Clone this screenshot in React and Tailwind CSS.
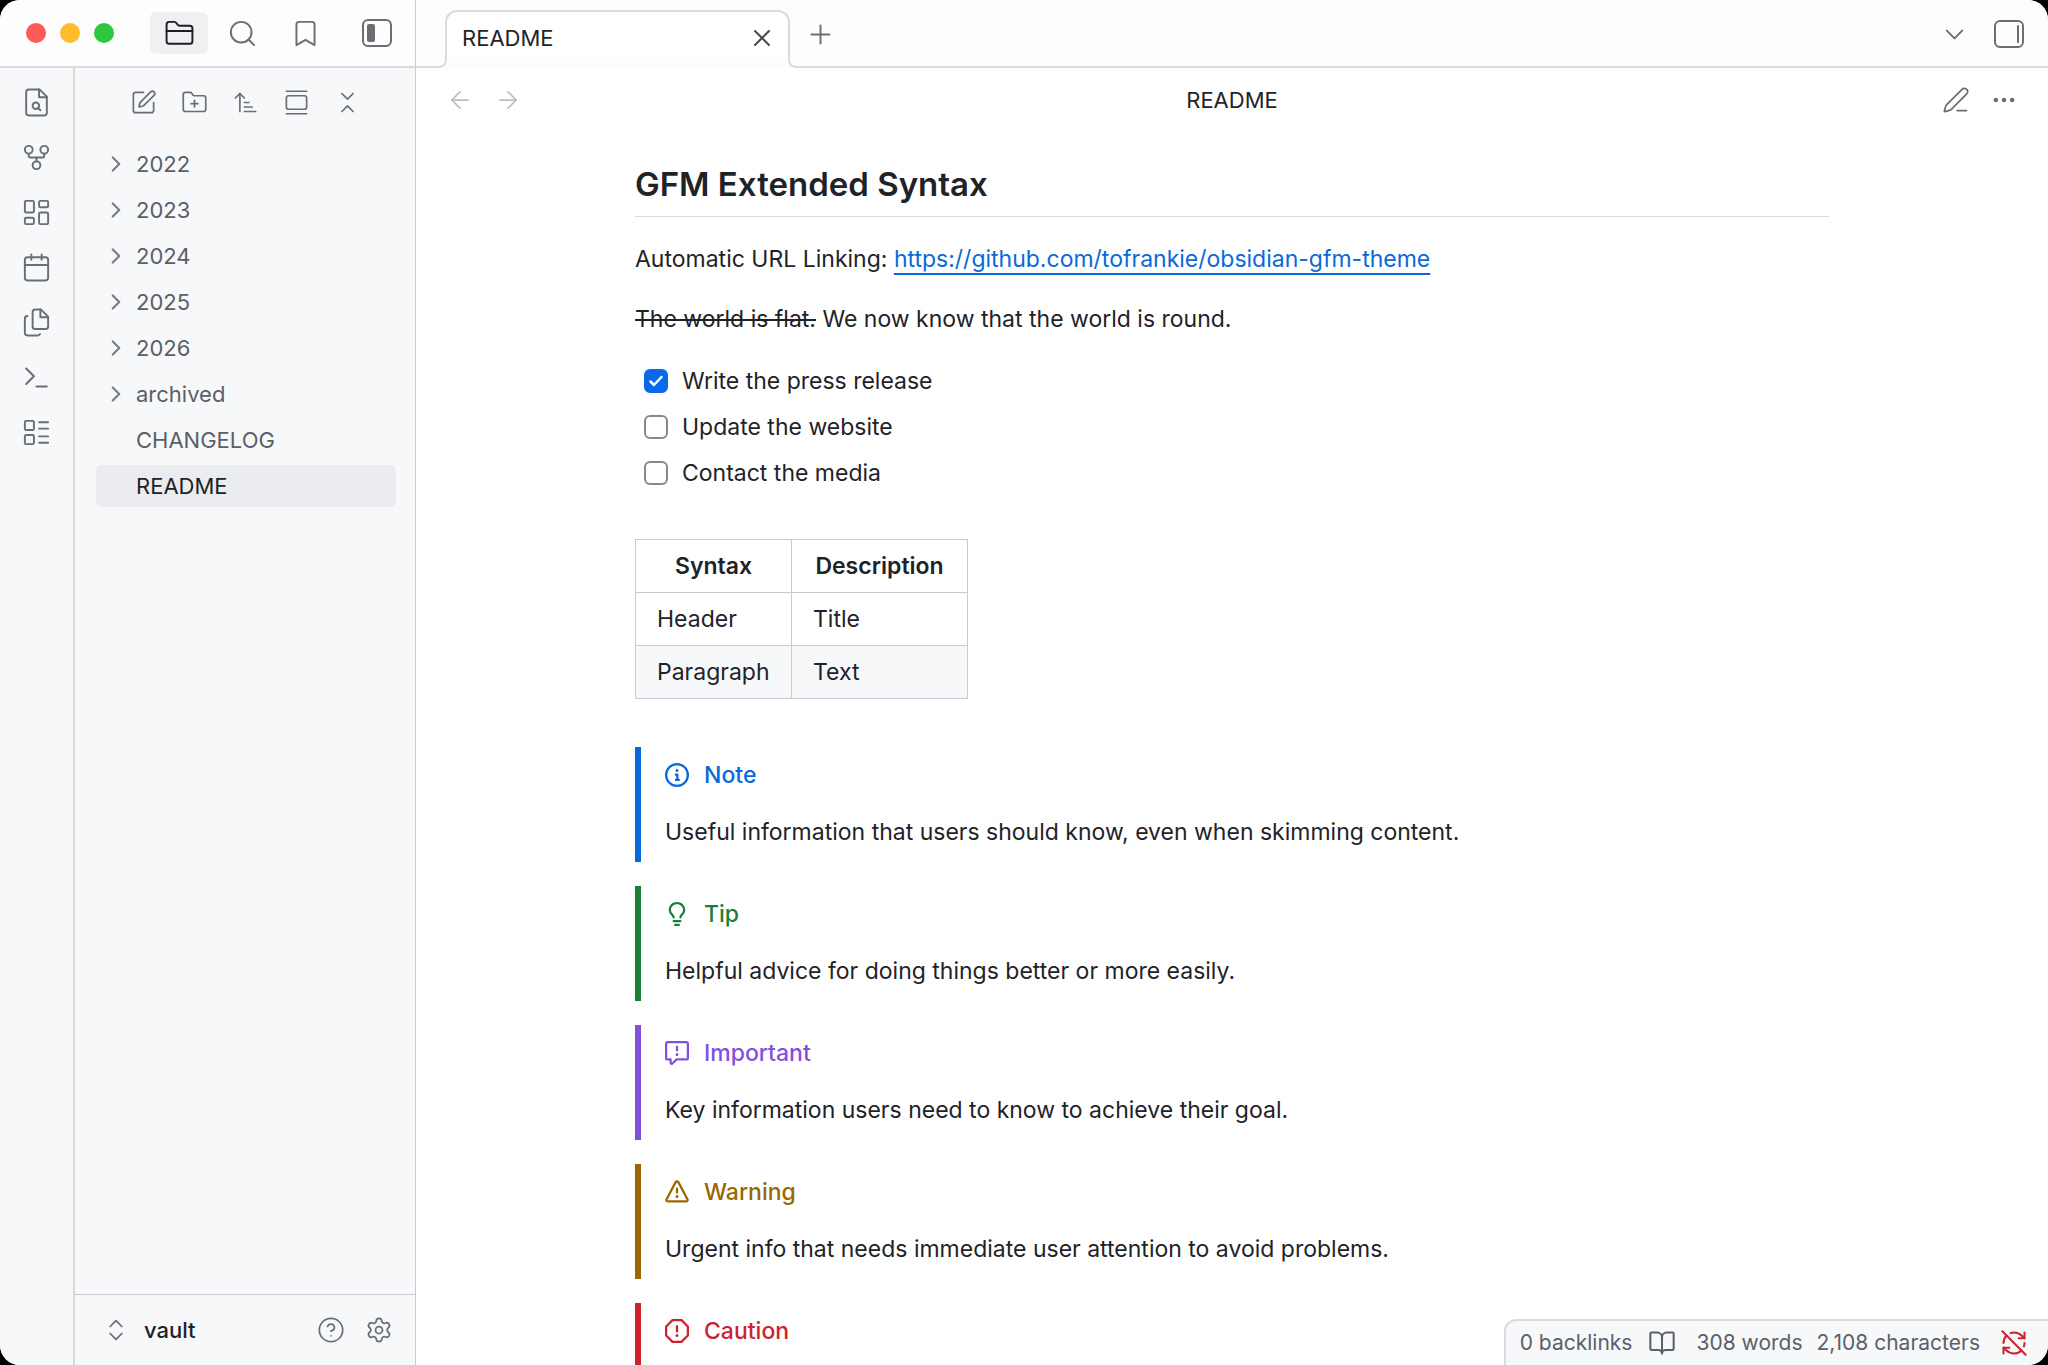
import {
  ArrowLeft,
  ArrowRight,
  ArrowUpNarrowWide,
  BookOpen,
  Bookmark,
  Calendar,
  ChevronDown,
  ChevronRight,
  ChevronsDownUp,
  ChevronsUpDown,
  CircleHelp,
  Ellipsis,
  FolderClosed,
  FolderPlus,
  GalleryVertical,
  GitFork,
  LayoutDashboard,
  LayoutList,
  PenLine,
  Plus,
  RefreshCwOff,
  Search,
  Settings,
  SquarePen,
  Terminal,
  X
} from "lucide-react";

function FileSearchIcon({ size, strokeWidth }) {
  return (
    <svg width={size} height={size} viewBox="0 0 24 24" fill="none" stroke="currentColor" strokeWidth={strokeWidth} strokeLinecap="round" strokeLinejoin="round">
      <path d="M14.5 2H6a2 2 0 0 0-2 2v16a2 2 0 0 0 2 2h12a2 2 0 0 0 2-2V7.5Z" />
      <path d="M14 2v6h6" />
      <circle cx="11.5" cy="14.5" r="2.5" />
      <path d="M13.3 16.3 15 18" />
    </svg>
  );
}

function FilesIcon({ size, strokeWidth }) {
  return (
    <svg width={size} height={size} viewBox="0 0 24 24" fill="none" stroke="currentColor" strokeWidth={strokeWidth} strokeLinecap="round" strokeLinejoin="round">
      <path d="M15.5 2H11a2 2 0 0 0-2 2v11a2 2 0 0 0 2 2h8a2 2 0 0 0 2-2V7.5Z" />
      <path d="M15 2v6h6" />
      <path d="M5 7a2 2 0 0 0-2 2v11a2 2 0 0 0 2 2h8a2 2 0 0 0 1.7-1" />
    </svg>
  );
}

function SidebarIcon({ side }) {
  return (
    <svg width="30" height="28" viewBox="0 0 30 28" fill="none" stroke="currentColor" strokeWidth="2">
      <rect x="1" y="1" width="28" height="26" rx="5" />
      {side === "left" ? (
        <rect x="5" y="5" width="8" height="18" rx="2" fill="currentColor" stroke="none" />
      ) : (
        <path d="M24 6v16" strokeLinecap="round" />
      )}
    </svg>
  );
}

const ribbon = [
  { label: "Open quick switcher", icon: FileSearchIcon },
  { label: "Open graph view", icon: GitFork },
  { label: "Create new canvas", icon: LayoutDashboard },
  { label: "Open today's daily note", icon: Calendar },
  { label: "Insert template", icon: FilesIcon },
  { label: "Open command palette", icon: Terminal },
  { label: "Create new base", icon: LayoutList }
];

const explorerActions = [
  { label: "New note", icon: SquarePen },
  { label: "New folder", icon: FolderPlus },
  { label: "Change sort order", icon: ArrowUpNarrowWide },
  { label: "Auto-reveal current file", icon: GalleryVertical },
  { label: "Collapse all", icon: ChevronsDownUp }
];

const files = [
  { name: "2022", folder: true },
  { name: "2023", folder: true },
  { name: "2024", folder: true },
  { name: "2025", folder: true },
  { name: "2026", folder: true },
  { name: "archived", folder: true },
  { name: "CHANGELOG" },
  { name: "README", active: true }
];

const tasks = [
  { id: "press", text: "Write the press release", done: true },
  { id: "website", text: "Update the website", done: false },
  { id: "media", text: "Contact the media", done: false }
];

const callouts = [
  {
    title: "Note",
    text: "Useful information that users should know, even when skimming content.",
    border: "border-[#0969da]",
    color: "text-[#0969da]",
    path: "M0 8a8 8 0 1 1 16 0A8 8 0 0 1 0 8Zm8-6.5a6.5 6.5 0 1 0 0 13 6.5 6.5 0 0 0 0-13ZM6.5 7.75A.75.75 0 0 1 7.25 7h1a.75.75 0 0 1 .75.75v2.75h.25a.75.75 0 0 1 0 1.5h-2a.75.75 0 0 1 0-1.5h.25v-2h-.25a.75.75 0 0 1-.75-.75ZM8 6a1 1 0 1 1 0-2 1 1 0 0 1 0 2Z"
  },
  {
    title: "Tip",
    text: "Helpful advice for doing things better or more easily.",
    border: "border-[#1a7f37]",
    color: "text-[#1a7f37]",
    path: "M8 1.5c-2.363 0-4 1.69-4 3.75 0 .984.424 1.625.984 2.304l.214.253c.223.264.47.556.673.848.284.411.537.896.621 1.49a.75.75 0 0 1-1.484.211c-.04-.282-.163-.547-.37-.847a8.456 8.456 0 0 0-.542-.68c-.084-.1-.173-.205-.268-.32C3.201 7.75 2.5 6.766 2.5 5.25 2.5 2.31 4.863 0 8 0s5.5 2.31 5.5 5.25c0 1.516-.701 2.5-1.328 3.259-.095.115-.184.22-.268.319-.207.245-.383.453-.541.681-.208.3-.33.565-.37.847a.751.751 0 0 1-1.485-.212c.084-.593.337-1.078.621-1.489.203-.292.45-.584.673-.848.075-.088.147-.173.213-.253.561-.679.985-1.32.985-2.304 0-2.06-1.637-3.75-4-3.75ZM5.75 12h4.5a.75.75 0 0 1 0 1.5h-4.5a.75.75 0 0 1 0-1.5ZM6 15.25a.75.75 0 0 1 .75-.75h2.5a.75.75 0 0 1 0 1.5h-2.5a.75.75 0 0 1-.75-.75Z"
  },
  {
    title: "Important",
    text: "Key information users need to know to achieve their goal.",
    border: "border-[#8250df]",
    color: "text-[#8250df]",
    path: "M0 1.75C0 .784.784 0 1.75 0h12.5C15.216 0 16 .784 16 1.75v9.5A1.75 1.75 0 0 1 14.25 13H8.06l-2.573 2.573A1.458 1.458 0 0 1 3 14.543V13H1.75A1.75 1.75 0 0 1 0 11.25Zm1.75-.25a.25.25 0 0 0-.25.25v9.5c0 .138.112.25.25.25h2a.75.75 0 0 1 .75.75v2.19l2.72-2.72a.749.749 0 0 1 .53-.22h6.5a.25.25 0 0 0 .25-.25v-9.5a.25.25 0 0 0-.25-.25Zm7 2.25v2.5a.75.75 0 0 1-1.5 0v-2.5a.75.75 0 0 1 1.5 0ZM9 9a1 1 0 1 1-2 0 1 1 0 0 1 2 0Z"
  },
  {
    title: "Warning",
    text: "Urgent info that needs immediate user attention to avoid problems.",
    border: "border-[#9a6700]",
    color: "text-[#9a6700]",
    path: "M6.457 1.047c.659-1.234 2.427-1.234 3.086 0l6.082 11.378A1.75 1.75 0 0 1 14.082 15H1.918a1.75 1.75 0 0 1-1.543-2.575Zm1.763.707a.25.25 0 0 0-.44 0L1.698 13.132a.25.25 0 0 0 .22.368h12.164a.25.25 0 0 0 .22-.368Zm.53 3.996v2.5a.75.75 0 0 1-1.5 0v-2.5a.75.75 0 0 1 1.5 0ZM9 11a1 1 0 1 1-2 0 1 1 0 0 1 2 0Z"
  },
  {
    title: "Caution",
    border: "border-[#cf222e]",
    color: "text-[#cf222e]",
    path: "M4.47.22A.749.749 0 0 1 5 0h6c.199 0 .389.079.53.22l4.25 4.25c.141.14.22.331.22.53v6a.749.749 0 0 1-.22.53l-4.25 4.25A.749.749 0 0 1 11 16H5a.749.749 0 0 1-.53-.22L.22 11.53A.749.749 0 0 1 0 11V5c0-.199.079-.389.22-.53Zm.84 1.28L1.5 5.31v5.38l3.81 3.81h5.38l3.81-3.81V5.31L10.69 1.5ZM8 4a.75.75 0 0 1 .75.75v3.5a.75.75 0 0 1-1.5 0v-3.5A.75.75 0 0 1 8 4Zm0 8a1 1 0 1 1 0-2 1 1 0 0 1 0 2Z"
  }
];

function IconButton({ label, className = "", children }) {
  return (
    <button type="button" aria-label={label} className={`flex shrink-0 items-center justify-center rounded-md ${className}`}>
      {children}
    </button>
  );
}

function TitleBar() {
  return (
    <header className="flex h-17 shrink-0 bg-[#fdfdfd] text-[#6b6e72]">
      <div className="flex w-[416px] shrink-0 items-center border-r border-b-2 border-r-[#c8cbcf] border-b-[#d9dbde] pl-[26px]">
        <div className="flex gap-[14px]">
          <span className="size-5 rounded-full bg-[#fc5b57]" />
          <span className="size-5 rounded-full bg-[#fdbb2d]" />
          <span className="size-5 rounded-full bg-[#2ec840]" />
        </div>
        <div className="ml-9 flex gap-[5px]">
          <IconButton label="Files" className="h-[42px] w-[58px] bg-[#eff0f1] text-[#1b1d20]">
            <FolderClosed size={31} strokeWidth={1.5} />
          </IconButton>
          <IconButton label="Search" className="h-[42px] w-[58px]">
            <Search size={31} strokeWidth={1.5} />
          </IconButton>
          <IconButton label="Bookmarks" className="h-[42px] w-[58px]">
            <Bookmark size={31} strokeWidth={1.5} />
          </IconButton>
        </div>
        <IconButton label="Collapse sidebar" className="ml-7">
          <SidebarIcon side="left" />
        </IconButton>
      </div>

      <div className="flex min-w-0 flex-1 items-end">
        <div className="h-3 w-[31px] shrink-0 rounded-br-lg border-r-2 border-b-2 border-[#d9dbde]" />
        <div className="-ml-0.5 flex h-[58px] w-[345px] shrink-0 items-center justify-between self-end rounded-t-xl border-2 border-b-0 border-[#d9dbde] bg-white pr-3 pb-1 pl-[15px] [clip-path:inset(0_0_10px_0)]">
          <span className="text-[22px] text-[#1f2328]">README</span>
          <IconButton label="Close tab" className="text-[#4a4d51]">
            <X size={28} strokeWidth={1.75} />
          </IconButton>
        </div>
        <div className="-ml-0.5 h-3 w-3 shrink-0 rounded-bl-lg border-b-2 border-l-2 border-[#d9dbde]" />
        <div className="flex h-full flex-1 items-center justify-between border-b-2 border-[#d9dbde] pt-0.5 pr-6 pl-[5px]">
          <IconButton label="New tab">
            <Plus size={31} strokeWidth={1.5} />
          </IconButton>
          <div className="flex items-center gap-6">
            <IconButton label="Tab list">
              <ChevronDown size={31} strokeWidth={1.5} />
            </IconButton>
            <IconButton label="Expand sidebar">
              <SidebarIcon side="right" />
            </IconButton>
          </div>
        </div>
      </div>
    </header>
  );
}

function Sidebar() {
  return (
    <aside className="flex w-[416px] shrink-0 border-r border-[#c8cbcf] bg-[#f6f8fa] text-[#6b6e72]">
      <div className="flex w-[75px] shrink-0 flex-col items-center gap-[23px] border-r-2 border-[#d6d8dc] pt-[18px]">
        {ribbon.map(({ label, icon: Icon }) => (
          <IconButton key={label} label={label} className="size-8">
            <Icon size={31} strokeWidth={1.5} />
          </IconButton>
        ))}
      </div>

      <div className="flex min-w-0 flex-1 flex-col">
        <div className="flex gap-[23px] pt-5 pl-[54px]">
          {explorerActions.map(({ label, icon: Icon }) => (
            <IconButton key={label} label={label} className="size-7">
              <Icon size={27} strokeWidth={1.5} />
            </IconButton>
          ))}
        </div>

        <nav className="flex flex-1 flex-col gap-1 pt-[27px] pr-[19px] pl-[21px]">
          {files.map((file) => (
            <button
              key={file.name}
              type="button"
              className={`flex h-[42px] items-center gap-2 rounded-md pl-2 text-[22px] ${file.active ? "bg-[#ebecef] text-[#1f2328]" : "text-[#5c6066]"}`}
            >
              <span className="flex w-6 justify-center">
                {file.folder && <ChevronRight size={26} strokeWidth={2} className="shrink-0 text-[#7a7d81]" />}
              </span>
              {file.name}
            </button>
          ))}
        </nav>

        <div className="flex h-[71px] items-center border-t border-[#c8cbcf] pr-[22px] pl-[27px]">
          <button type="button" className="flex flex-1 items-center gap-3.5 text-[22px] font-medium text-[#1f2328]">
            <ChevronsUpDown size={28} strokeWidth={1.5} className="text-[#6b6e72]" />
            vault
          </button>
          <div className="flex gap-5">
            <IconButton label="Help">
              <CircleHelp size={28} strokeWidth={1.5} />
            </IconButton>
            <IconButton label="Settings">
              <Settings size={28} strokeWidth={1.5} />
            </IconButton>
          </div>
        </div>
      </div>
    </aside>
  );
}

function ViewHeader() {
  return (
    <div className="flex h-16 shrink-0 items-center justify-between px-[30px] text-[#6b6e72]">
      <div className="flex w-24 gap-5 text-[#bcbdbf]">
        <IconButton label="Back">
          <ArrowLeft size={28} strokeWidth={1.5} />
        </IconButton>
        <IconButton label="Forward">
          <ArrowRight size={28} strokeWidth={1.5} />
        </IconButton>
      </div>
      <span className="text-[22px] text-[#1f2328]">README</span>
      <div className="flex w-24 justify-end gap-5">
        <IconButton label="Edit">
          <PenLine size={28} strokeWidth={1.5} />
        </IconButton>
        <IconButton label="More options">
          <Ellipsis size={28} strokeWidth={2} />
        </IconButton>
      </div>
    </div>
  );
}

function Callout({ item }) {
  return (
    <section className={`mb-6 h-[115px] border-l-6 pt-2.5 pl-6 ${item.border}`}>
      <h2 className={`flex h-9 items-center gap-[15px] font-medium ${item.color}`}>
        <svg width="24" height="24" viewBox="0 0 16 16" fill="currentColor" aria-hidden="true">
          <path d={item.path} />
        </svg>
        {item.title}
      </h2>
      {item.text && <p className="mt-[21px] leading-9">{item.text}</p>}
    </section>
  );
}

function Note() {
  return (
    <article className="mx-auto w-full max-w-[1194px] pt-7 text-[23px] leading-9 text-[#1f2328]">
      <h1 className="mb-6 border-b border-[#d8dbdf] pb-2 text-[33px] leading-12 font-semibold">GFM Extended Syntax</h1>
      <p className="mb-6">
        Automatic URL Linking:{" "}
        <a href="#link" className="text-[#0969da] underline decoration-2 underline-offset-[6px]">
          https://github.com/tofrankie/obsidian-gfm-theme
        </a>
      </p>
      <p className="mb-[26px]">
        <del>The world is flat.</del> We now know that the world is round.
      </p>

      <ul className="mb-12 flex flex-col gap-2.5 pl-[9px]">
        {tasks.map((task) => (
          <li key={task.id} className="flex items-center gap-3.5">
            <span className="relative flex size-6 shrink-0">
              <input
                id={task.id}
                type="checkbox"
                defaultChecked={task.done}
                className="peer size-6 appearance-none rounded-md border-2 border-[#85898e] bg-white checked:border-[#0969ea] checked:bg-[#0969ea]"
              />
              <svg viewBox="0 0 24 24" className="pointer-events-none absolute inset-0 hidden size-6 peer-checked:block" fill="none" stroke="white" strokeWidth="2.5" strokeLinecap="round" strokeLinejoin="round">
                <path d="m6.5 12.5 3.5 3.5 7.5-8" />
              </svg>
            </span>
            <label htmlFor={task.id}>{task.text}</label>
          </li>
        ))}
      </ul>

      <table className="mb-12 w-[333px] border-collapse">
        <thead>
          <tr>
            <th className="w-[156px] border border-[#c8ccd1] px-[21px] py-2 font-semibold">Syntax</th>
            <th className="border border-[#c8ccd1] px-[21px] py-2 font-semibold">Description</th>
          </tr>
        </thead>
        <tbody>
          <tr>
            <td className="border border-[#c8ccd1] px-[21px] py-2">Header</td>
            <td className="border border-[#c8ccd1] px-[21px] py-2">Title</td>
          </tr>
          <tr className="bg-[#f6f8fa]">
            <td className="border border-[#c8ccd1] px-[21px] py-2">Paragraph</td>
            <td className="border border-[#c8ccd1] px-[21px] py-2">Text</td>
          </tr>
        </tbody>
      </table>

      {callouts.map((item) => (
        <Callout key={item.title} item={item} />
      ))}
    </article>
  );
}

function StatusBar() {
  return (
    <footer className="absolute right-0 bottom-0 flex h-[46px] items-center rounded-tl-xl border-t-2 border-l-2 border-[#d9dbde] bg-[#f6f8fa] pr-5 pl-3.5 text-[21px] text-[#5c6066]">
      <span>0 backlinks</span>
      <BookOpen size={28} strokeWidth={1.75} className="mr-5 ml-4" />
      <span className="mr-3.5">308 words</span>
      <span>2,108 characters</span>
      <RefreshCwOff size={28} strokeWidth={1.75} className="ml-5 text-[#cf222e]" />
    </footer>
  );
}

function App() {
  return (
    <div className="h-screen bg-black font-['Inter',sans-serif]">
      <div className="relative flex h-full flex-col overflow-hidden rounded-[20px] bg-white">
        <TitleBar />
        <div className="flex min-h-0 flex-1">
          <Sidebar />
          <main className="flex min-w-0 flex-1 flex-col overflow-hidden">
            <ViewHeader />
            <Note />
          </main>
        </div>
        <StatusBar />
      </div>
    </div>
  );
}

export default App;
